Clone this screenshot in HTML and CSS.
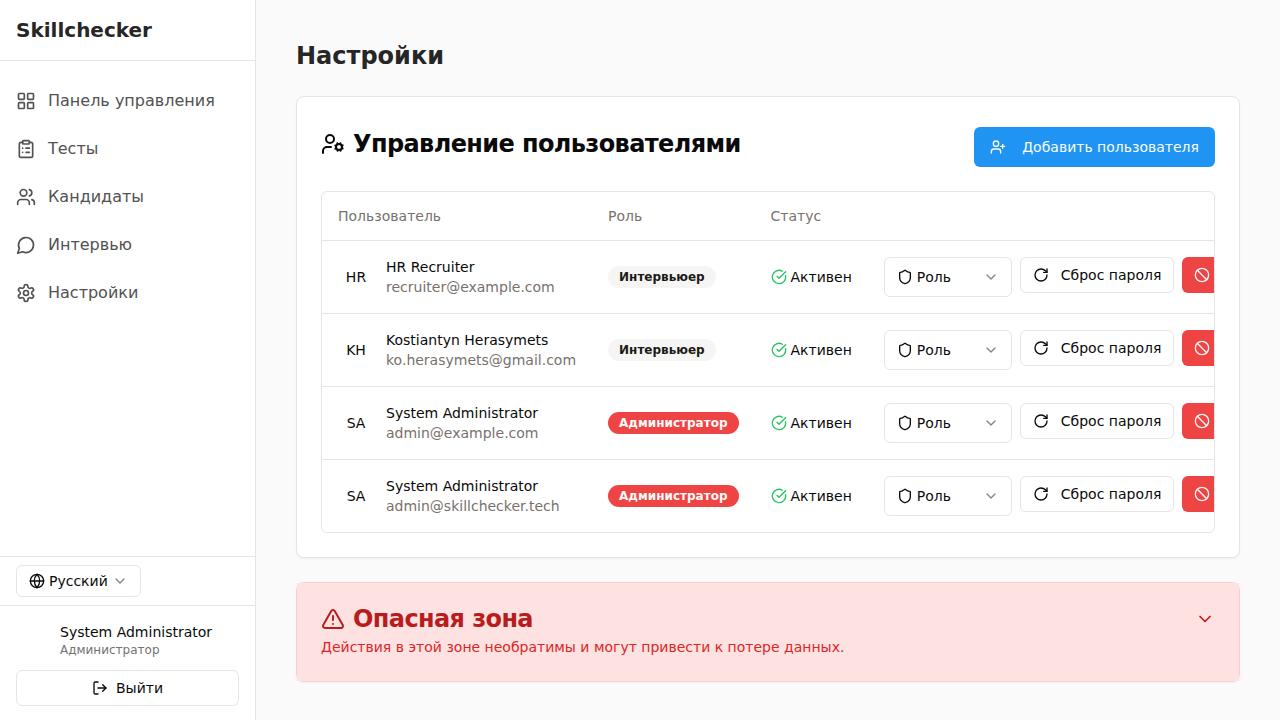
FILE: index.html
```
<!DOCTYPE html>
<html lang="ru">
<head>
<meta charset="utf-8">
<title>Skillchecker</title>
<link rel="stylesheet" href="styles.css">
</head>
<body>
<svg class="sprite" aria-hidden="true">
  <symbol id="grid" viewBox="0 0 24 24"><rect width="7" height="7" x="3" y="3" rx="1"/><rect width="7" height="7" x="14" y="3" rx="1"/><rect width="7" height="7" x="14" y="14" rx="1"/><rect width="7" height="7" x="3" y="14" rx="1"/></symbol>
  <symbol id="clipboard" viewBox="0 0 24 24"><rect width="8" height="4" x="8" y="2" rx="1" ry="1"/><path d="M16 4h2a2 2 0 0 1 2 2v14a2 2 0 0 1-2 2H6a2 2 0 0 1-2-2V6a2 2 0 0 1 2-2h2"/><path d="M12 11h4"/><path d="M12 16h4"/><path d="M8 11h.01"/><path d="M8 16h.01"/></symbol>
  <symbol id="users" viewBox="0 0 24 24"><path d="M16 21v-2a4 4 0 0 0-4-4H6a4 4 0 0 0-4 4v2"/><circle cx="9" cy="7" r="4"/><path d="M22 21v-2a4 4 0 0 0-3-3.87"/><path d="M16 3.13a4 4 0 0 1 0 7.75"/></symbol>
  <symbol id="message" viewBox="0 0 24 24"><path d="M7.9 20A9 9 0 1 0 4 16.1L2 22Z"/></symbol>
  <symbol id="settings" viewBox="0 0 24 24"><path d="M12.22 2h-.44a2 2 0 0 0-2 2v.18a2 2 0 0 1-1 1.73l-.43.25a2 2 0 0 1-2 0l-.15-.08a2 2 0 0 0-2.73.73l-.22.38a2 2 0 0 0 .73 2.73l.15.1a2 2 0 0 1 1 1.72v.51a2 2 0 0 1-1 1.74l-.15.09a2 2 0 0 0-.73 2.73l.22.38a2 2 0 0 0 2.73.73l.15-.08a2 2 0 0 1 2 0l.43.25a2 2 0 0 1 1 1.73V20a2 2 0 0 0 2 2h.44a2 2 0 0 0 2-2v-.18a2 2 0 0 1 1-1.73l.43-.25a2 2 0 0 1 2 0l.15.08a2 2 0 0 0 2.73-.73l.22-.39a2 2 0 0 0-.73-2.73l-.15-.08a2 2 0 0 1-1-1.74v-.5a2 2 0 0 1 1-1.74l.15-.09a2 2 0 0 0 .73-2.73l-.22-.38a2 2 0 0 0-2.73-.73l-.15.08a2 2 0 0 1-2 0l-.43-.25a2 2 0 0 1-1-1.73V4a2 2 0 0 0-2-2z"/><circle cx="12" cy="12" r="3"/></symbol>
  <symbol id="globe" viewBox="0 0 24 24"><circle cx="12" cy="12" r="10"/><path d="M12 2a14.5 14.5 0 0 0 0 20 14.5 14.5 0 0 0 0-20"/><path d="M2 12h20"/></symbol>
  <symbol id="chevron" viewBox="0 0 24 24"><path d="m6 9 6 6 6-6"/></symbol>
  <symbol id="logout" viewBox="0 0 24 24"><path d="M9 21H5a2 2 0 0 1-2-2V5a2 2 0 0 1 2-2h4"/><path d="m16 17 5-5-5-5"/><path d="M21 12H9"/></symbol>
  <symbol id="user-cog" viewBox="0 0 24 24"><circle cx="18" cy="15" r="3"/><circle cx="9" cy="7" r="4"/><path d="M10 15H6a4 4 0 0 0-4 4v2"/><path d="m21.7 16.4-.9-.3"/><path d="m15.2 13.9-.9-.3"/><path d="m16.6 18.7.3-.9"/><path d="m19.1 12.2.3-.9"/><path d="m19.6 18.7-.4-1"/><path d="m16.8 12.3-.4-1"/><path d="m14.3 16.6 1-.4"/><path d="m20.7 13.8 1-.4"/></symbol>
  <symbol id="user-plus" viewBox="0 0 24 24"><path d="M16 21v-2a4 4 0 0 0-4-4H6a4 4 0 0 0-4 4v2"/><circle cx="9" cy="7" r="4"/><path d="M19 8v6"/><path d="M22 11h-6"/></symbol>
  <symbol id="check" viewBox="0 0 24 24"><path d="M21.801 10A10 10 0 1 1 17 3.335"/><path d="m9 11 3 3L22 4"/></symbol>
  <symbol id="shield" viewBox="0 0 24 24"><path d="M20 13c0 5-3.5 7.5-7.66 8.95a1 1 0 0 1-.67-.01C7.5 20.5 4 18 4 13V6a1 1 0 0 1 1-1c2 0 4.5-1.2 6.24-2.72a1.17 1.17 0 0 1 1.52 0C14.51 3.81 17 5 19 5a1 1 0 0 1 1 1z"/></symbol>
  <symbol id="rotate" viewBox="0 0 24 24"><path d="M21 12a9 9 0 1 1-9-9c2.52 0 4.93 1 6.74 2.74L21 8"/><path d="M21 3v5h-5"/></symbol>
  <symbol id="ban" viewBox="0 0 24 24"><circle cx="12" cy="12" r="10"/><path d="m4.9 4.9 14.2 14.2"/></symbol>
  <symbol id="alert" viewBox="0 0 24 24"><path d="m21.73 18-8-14a2 2 0 0 0-3.48 0l-8 14A2 2 0 0 0 4 21h16a2 2 0 0 0 1.73-3"/><path d="M12 9v4"/><path d="M12 17h.01"/></symbol>
</svg>
<div class="app">
  <aside class="sidebar">
    <div class="brand">Skillchecker</div>
    <nav class="nav">
      <a class="nav-item"><svg class="icon icon-md"><use href="#grid"/></svg>Панель управления</a>
      <a class="nav-item"><svg class="icon icon-md"><use href="#clipboard"/></svg>Тесты</a>
      <a class="nav-item"><svg class="icon icon-md"><use href="#users"/></svg>Кандидаты</a>
      <a class="nav-item"><svg class="icon icon-md"><use href="#message"/></svg>Интервью</a>
      <a class="nav-item"><svg class="icon icon-md"><use href="#settings"/></svg>Настройки</a>
    </nav>
    <div class="language">
      <button class="btn lang-btn"><svg class="icon"><use href="#globe"/></svg>Русский<svg class="icon faded"><use href="#chevron"/></svg></button>
    </div>
    <div class="account">
      <div class="account-info">
        <div class="account-name">System Administrator</div>
        <div class="account-role">Администратор</div>
      </div>
      <button class="btn logout"><svg class="icon"><use href="#logout"/></svg>Выйти</button>
    </div>
  </aside>
  <main class="main">
    <h1 class="page-title">Настройки</h1>
    <section class="card users-card">
      <header class="card-header">
        <h2 class="card-title with-gap"><svg class="icon icon-lg"><use href="#user-cog"/></svg>Управление пользователями</h2>
        <button class="btn add-btn"><svg class="icon"><use href="#user-plus"/></svg>Добавить пользователя</button>
      </header>
      <div class="table-wrap">
        <table class="table">
          <thead><tr><th>Пользователь</th><th>Роль</th><th>Статус</th><th></th></tr></thead>
          <tbody>
            <tr>
              <td><div class="user"><span class="avatar">HR</span><div><div>HR Recruiter</div><div class="email">recruiter@example.com</div></div></div></td>
              <td><span class="badge">Интервьюер</span></td>
              <td><div class="status"><svg class="icon"><use href="#check"/></svg>Активен</div></td>
              <td><div class="actions"><button class="btn role-btn"><svg class="icon"><use href="#shield"/></svg>Роль<svg class="icon faded"><use href="#chevron"/></svg></button><button class="btn reset-btn"><svg class="icon"><use href="#rotate"/></svg>Сброс пароля</button><button class="btn block-btn"><svg class="icon"><use href="#ban"/></svg></button></div></td>
            </tr>
            <tr>
              <td><div class="user"><span class="avatar">KH</span><div><div>Kostiantyn Herasymets</div><div class="email">ko.herasymets@gmail.com</div></div></div></td>
              <td><span class="badge">Интервьюер</span></td>
              <td><div class="status"><svg class="icon"><use href="#check"/></svg>Активен</div></td>
              <td><div class="actions"><button class="btn role-btn"><svg class="icon"><use href="#shield"/></svg>Роль<svg class="icon faded"><use href="#chevron"/></svg></button><button class="btn reset-btn"><svg class="icon"><use href="#rotate"/></svg>Сброс пароля</button><button class="btn block-btn"><svg class="icon"><use href="#ban"/></svg></button></div></td>
            </tr>
            <tr>
              <td><div class="user"><span class="avatar">SA</span><div><div>System Administrator</div><div class="email">admin@example.com</div></div></div></td>
              <td><span class="badge badge-admin">Администратор</span></td>
              <td><div class="status"><svg class="icon"><use href="#check"/></svg>Активен</div></td>
              <td><div class="actions"><button class="btn role-btn"><svg class="icon"><use href="#shield"/></svg>Роль<svg class="icon faded"><use href="#chevron"/></svg></button><button class="btn reset-btn"><svg class="icon"><use href="#rotate"/></svg>Сброс пароля</button><button class="btn block-btn"><svg class="icon"><use href="#ban"/></svg></button></div></td>
            </tr>
            <tr>
              <td><div class="user"><span class="avatar">SA</span><div><div>System Administrator</div><div class="email">admin@skillchecker.tech</div></div></div></td>
              <td><span class="badge badge-admin">Администратор</span></td>
              <td><div class="status"><svg class="icon"><use href="#check"/></svg>Активен</div></td>
              <td><div class="actions"><button class="btn role-btn"><svg class="icon"><use href="#shield"/></svg>Роль<svg class="icon faded"><use href="#chevron"/></svg></button><button class="btn reset-btn"><svg class="icon"><use href="#rotate"/></svg>Сброс пароля</button><button class="btn block-btn"><svg class="icon"><use href="#ban"/></svg></button></div></td>
            </tr>
          </tbody>
        </table>
      </div>
    </section>
    <section class="card danger">
      <div class="danger-body">
        <div class="danger-head">
          <h2 class="card-title"><svg class="icon icon-lg"><use href="#alert"/></svg>Опасная зона</h2>
          <svg class="icon icon-md"><use href="#chevron"/></svg>
        </div>
        <p class="danger-text">Действия в этой зоне необратимы и могут привести к потере данных.</p>
      </div>
    </section>
  </main>
</div>
</body>
</html>
```
FILE: styles.css
```
* { box-sizing: border-box; margin: 0; padding: 0; }
body {
  font: 14px/20px "DejaVu Sans", sans-serif;
  color: #0a0a0a;
  background: #fafafa;
}
.sprite { display: none; }
.icon {
  width: 16px;
  height: 16px;
  flex: none;
  fill: none;
  stroke: currentColor;
  stroke-width: 2;
  stroke-linecap: round;
  stroke-linejoin: round;
}
.icon-md { width: 20px; height: 20px; }
.icon-lg { width: 24px; height: 24px; }
.faded { opacity: .5; }

.app { display: flex; height: 720px; overflow: hidden; }
.sidebar {
  width: 256px;
  flex: none;
  display: flex;
  flex-direction: column;
  background: #fff;
  border-right: 1px solid #e5e5e5;
}
.brand {
  padding: 16px;
  font-size: 20px;
  line-height: 28px;
  font-weight: 700;
  color: #262626;
  border-bottom: 1px solid #e5e5e5;
}
.nav { flex: 1; display: flex; flex-direction: column; gap: 8px; padding: 20px 16px; }
.nav-item {
  display: flex;
  align-items: center;
  gap: 12px;
  height: 40px;
  font-size: 16px;
  line-height: 24px;
  color: #525252;
}
.language { padding: 8px 16px; border-top: 1px solid #e5e5e5; }
.btn {
  display: flex;
  align-items: center;
  font: inherit;
  color: inherit;
  white-space: nowrap;
  background: #fff;
  border: 1px solid #e5e5e5;
  border-radius: 6px;
}
.lang-btn { height: 32px; padding: 0 12px; gap: 4px; }
.account { padding: 16px 16px 14px; border-top: 1px solid #e5e5e5; }
.account-info { padding-left: 44px; margin-bottom: 12px; }
.account-role { font-size: 12px; line-height: 16px; color: #737373; }
.logout { width: 100%; height: 36px; justify-content: center; gap: 8px; }

.main { flex: 1; min-width: 0; padding: 40px; }
.page-title { font-size: 24px; line-height: 32px; color: #262626; margin-bottom: 24px; }
.card {
  background: #fff;
  border: 1px solid #e5e5e5;
  border-radius: 8px;
  box-shadow: 0 1px 2px rgba(0, 0, 0, .05);
}
.users-card { padding: 30px 24px 24px; margin-bottom: 24px; }
.card-header { display: flex; align-items: center; justify-content: space-between; margin-bottom: 24px; }
.card-title {
  display: flex;
  align-items: center;
  gap: 8px;
  font-size: 24px;
  line-height: 24px;
  letter-spacing: -.6px;
}
.with-gap { padding-bottom: 6px; }
.add-btn { height: 40px; padding: 0 16px; gap: 16px; color: #fafdff; background: #2094f3; border: 0; }

.table-wrap { border: 1px solid #e5e5e5; border-radius: 6px; overflow: hidden; }
.table { width: 100%; border-collapse: collapse; white-space: nowrap; }
.table tr { border-bottom: 1px solid #e5e5e5; }
.table tbody tr:last-child { border-bottom: 0; }
.table th { height: 48px; padding: 0 16px; text-align: left; font-weight: 400; color: #78716c; }
.table td { padding: 16px; vertical-align: middle; }
.user { display: flex; align-items: center; gap: 12px; }
.avatar { width: 36px; text-align: center; }
.email { color: #78716c; }
.badge {
  display: inline-block;
  padding: 2px 10px;
  border: 1px solid transparent;
  border-radius: 999px;
  font-size: 12px;
  line-height: 16px;
  font-weight: 700;
  color: #1c1917;
  background: #f5f5f4;
}
.badge-admin { color: #fafaf9; background: #ef4444; }
.status { display: flex; align-items: center; gap: 4px; }
.status .icon { color: #22c55e; }
.actions { display: flex; align-items: flex-start; gap: 8px; }
.role-btn { width: 128px; height: 40px; padding: 0 12px; gap: 4px; }
.role-btn .faded { margin-left: auto; }
.reset-btn { height: 36px; padding: 0 12px; gap: 12px; }
.block-btn { width: 140px; height: 36px; padding: 0 12px; color: #fafaf9; background: #ef4444; border: 0; }

.danger { border-color: #fecaca; }
.danger-body { padding: 24px; background: #fee2e2; }
.danger-head { display: flex; align-items: center; justify-content: space-between; color: #b91c1c; margin-bottom: 6px; }
.danger-text { color: #dc2626; }
```
